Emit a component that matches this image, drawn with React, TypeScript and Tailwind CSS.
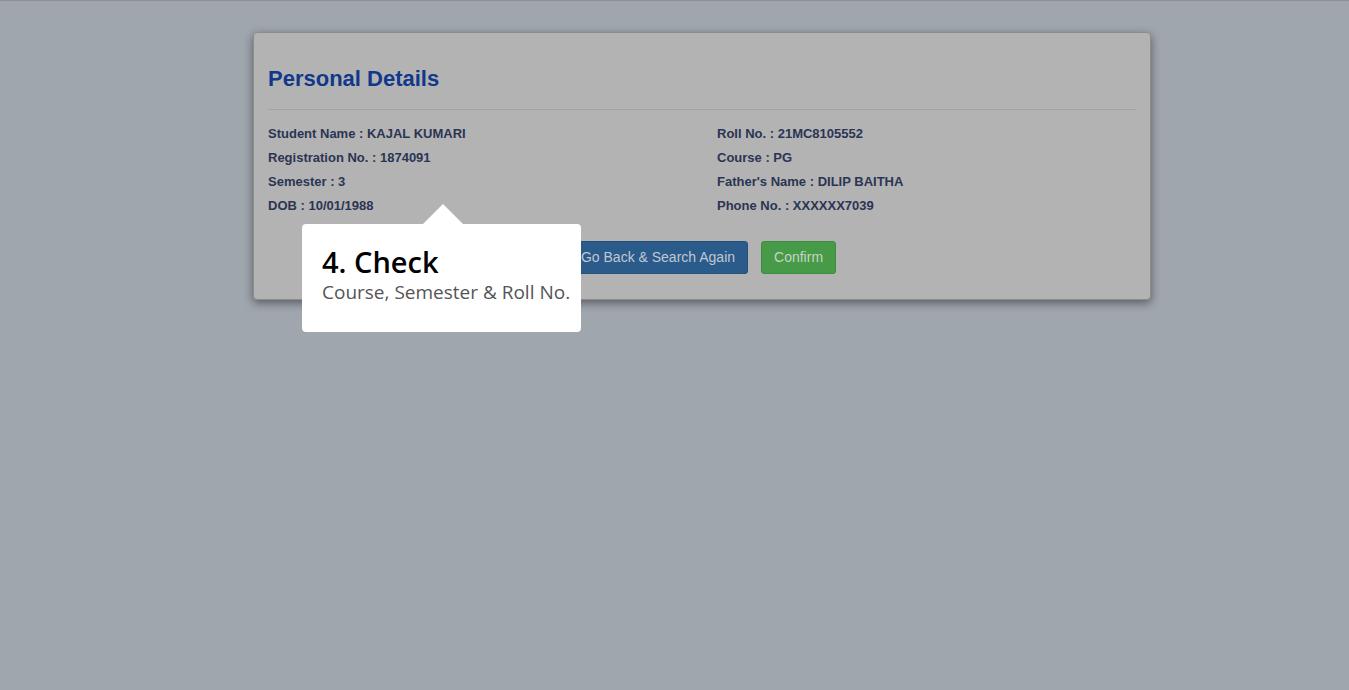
const leftRows = [
  { label: "Student Name", value: "KAJAL KUMARI" },
  { label: "Registration No.", value: "1874091" },
  { label: "Semester", value: "3" },
  { label: "DOB", value: "10/01/1988" },
];

const rightRows = [
  { label: "Roll No.", value: "21MC8105552" },
  { label: "Course", value: "PG" },
  { label: "Father's Name", value: "DILIP BAITHA" },
  { label: "Phone No.", value: "XXXXXX7039" },
];

function DetailRow({ label, value }: { label: string; value: string }) {
  return (
    <div className="h-[24px] leading-[24px] text-[13px] font-bold text-[#2b3553]">
      {label} : {value}
    </div>
  );
}

// tour step popover, sits over the dimmed page
function TourTip() {
  return (
    <div
      className="absolute left-[302px] top-[223px] w-[279px] h-[108px] bg-white rounded-[4px] pl-[20px] pt-[18px]"
      style={{ fontFamily: '"Open Sans", "Noto Sans", sans-serif' }}
    >
      <div className="absolute left-[121px] -top-[20px] w-0 h-0 border-l-[20px] border-r-[20px] border-b-[20px] border-l-transparent border-r-transparent border-b-white" />
      <div className="text-[29px] leading-[40px] font-semibold text-black">4. Check</div>
      <div className="text-[19px] leading-[24px] text-[#555555] -mt-[2px]">
        Course, Semester &amp; Roll No.
      </div>
    </div>
  );
}

export default function App() {
  return (
    <div
      className="relative min-h-[690px] bg-[#a0a6ae] border-t border-[#8e9096] pt-[31px]"
      style={{ fontFamily: '"Liberation Sans", Arial, sans-serif' }}
    >
      <div className="ml-[253px] w-[898px] bg-[#b3b3b3] border border-[#8c8c8c] rounded-[4px] shadow-[0_3px_10px_rgba(0,0,0,0.45)] px-[14px] pt-[32px] pb-[25px]">
        <h2 className="text-[22px] leading-[28px] font-bold text-[#11388a]">Personal Details</h2>
        <div className="mt-[16px] border-t border-[#a3a3a3]" />
        <div className="grid grid-cols-2 mt-[12px]">
          <div>
            {leftRows.map((r) => (
              <DetailRow key={r.label} {...r} />
            ))}
          </div>
          <div className="pl-[15px]">
            {rightRows.map((r) => (
              <DetailRow key={r.label} {...r} />
            ))}
          </div>
        </div>
        <div className="flex justify-center gap-[13px] mt-[23px]">
          <button className="h-[33px] px-[12px] rounded-[3px] bg-[#2b5b8b] border border-[#26507c] text-[14px] text-[#c0c8d0]">
            Go Back &amp; Search Again
          </button>
          <button className="h-[33px] px-[12px] rounded-[3px] bg-[#479a47] border border-[#3f8a3f] text-[14px] text-[#c4d4c4]">
            Confirm
          </button>
        </div>
      </div>
      <TourTip />
    </div>
  );
}
